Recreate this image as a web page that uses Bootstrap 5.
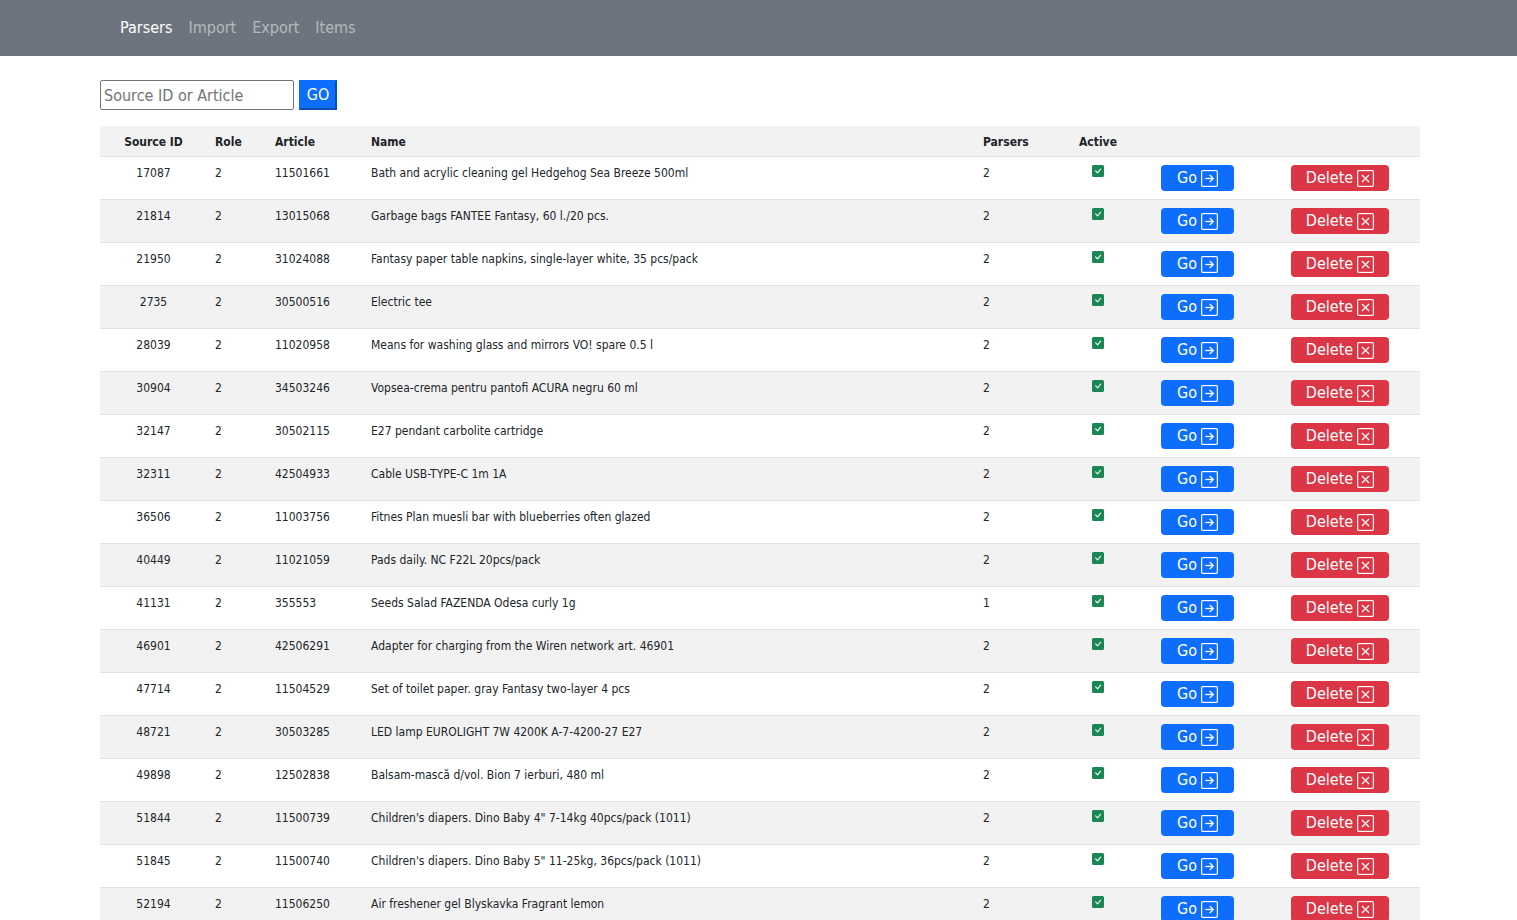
<!DOCTYPE html>
<html lang="en">
<head>
<meta charset="utf-8">
<meta name="viewport" content="width=device-width, initial-scale=1">
<title>Parsers</title>
<link href="https://cdn.jsdelivr.net/npm/bootstrap@5.3.0/dist/css/bootstrap.min.css" rel="stylesheet">
<style>
  body { font-family: Tahoma, "DejaVu Sans Condensed", "DejaVu Sans", sans-serif; }
  .page-wrap { padding-left: 100px; padding-right: 97px; }
  .top-bar { background: #6c757d; }
  .top-bar .nav-link { --bs-nav-link-color: rgba(255, 255, 255, .5); }
  .top-bar .nav-link.active { color: #fff; }
  .search-form { gap: 5px; }
  .search-box { width: 194px; height: 30px; padding: 1px 3px; border: 1px solid #767676; border-radius: 2px; }
  .search-box::placeholder { color: #757575; opacity: 1; }
  .search-go { width: 38px; height: 30px; padding: 0; color: #fff; background: #0d6efd; border: 2px solid; border-color: #0d6efd #0a4fb5 #0a4fb5 #0d6efd; line-height: 26px; }
  .items-table { table-layout: fixed; min-width: 960px; font-size: 12px; line-height: 16px; }
  .items-table > tbody { border-top: 0; }
  .items-table > thead > tr > * { padding-bottom: 6px; background: #f2f2f2; border-color: #dee2e6; box-shadow: none; }
  .items-table > tbody > tr:nth-child(even) > * { background: #f2f2f2; }
  .items-table svg { display: block; }
  .col-source { width: 107px; } .col-role { width: 60px; } .col-article { width: 96px; }
  .col-parsers { width: 96px; } .col-active { width: 54px; } .col-go { width: 145px; } .col-delete { width: 150px; }
  .cell-delete { padding-right: 18px !important; }
  .row-btn { display: inline-flex; align-items: center; justify-content: center; gap: 4px; height: 26px; padding: 0; border: 0; border-radius: 4px; color: #fff; font-size: 16px; line-height: 24px; vertical-align: top; }
  .row-btn svg { width: 17px; height: 17px; stroke: currentColor; stroke-width: .3; overflow: visible; }
  .btn-go { width: 73px; }
  .btn-delete { width: 98px; }
</style>
</head>
<body>
<svg class="d-none" aria-hidden="true">
  <symbol id="i-check" viewBox="0 0 16 16"><path fill="currentColor" d="M2 0a2 2 0 0 0-2 2v12a2 2 0 0 0 2 2h12a2 2 0 0 0 2-2V2a2 2 0 0 0-2-2H2zm10.03 4.97a.75.75 0 0 1 .011 1.05l-3.992 4.99a.75.75 0 0 1-1.08.02L4.324 8.384a.75.75 0 1 1 1.06-1.06l2.094 2.093 3.473-4.425a.75.75 0 0 1 1.08-.022z"/></symbol>
  <symbol id="i-go" viewBox="0 0 16 16"><path fill="currentColor" fill-rule="evenodd" d="M15 2a1 1 0 0 0-1-1H2a1 1 0 0 0-1 1v12a1 1 0 0 0 1 1h12a1 1 0 0 0 1-1V2zM0 2a2 2 0 0 1 2-2h12a2 2 0 0 1 2 2v12a2 2 0 0 1-2 2H2a2 2 0 0 1-2-2V2zm4.5 5.5a.5.5 0 0 0 0 1h5.793l-2.147 2.146a.5.5 0 0 0 .708.708l3-3a.5.5 0 0 0 0-.708l-3-3a.5.5 0 1 0-.708.708L10.293 7.5H4.5z"/></symbol>
  <symbol id="i-x" viewBox="0 0 16 16"><path fill="currentColor" d="M14 1a1 1 0 0 1 1 1v12a1 1 0 0 1-1 1H2a1 1 0 0 1-1-1V2a1 1 0 0 1 1-1h12zM2 0a2 2 0 0 0-2 2v12a2 2 0 0 0 2 2h12a2 2 0 0 0 2-2V2a2 2 0 0 0-2-2H2z"/><path fill="currentColor" d="M4.646 4.646a.5.5 0 0 1 .708 0L8 7.293l2.646-2.647a.5.5 0 0 1 .708.708L8.707 8l2.647 2.646a.5.5 0 0 1-.708.708L8 8.707l-2.646 2.647a.5.5 0 0 1-.708-.708L7.293 8 4.646 5.354a.5.5 0 0 1 0-.708z"/></symbol>
</svg>

<nav class="navbar navbar-expand top-bar">
  <div class="page-wrap w-100">
    <ul class="navbar-nav ps-2 ms-1">
      <li class="nav-item"><a class="nav-link active" aria-current="page" href="#">Parsers</a></li>
      <li class="nav-item"><a class="nav-link" href="#">Import</a></li>
      <li class="nav-item"><a class="nav-link" href="#">Export</a></li>
      <li class="nav-item"><a class="nav-link" href="#">Items</a></li>
    </ul>
  </div>
</nav>

<main class="page-wrap pt-4">
  <form class="search-form d-flex mb-3" onsubmit="return false">
    <input class="search-box" type="text" placeholder="Source ID or Article" aria-label="Source ID or Article">
    <button class="search-go" type="submit">GO</button>
  </form>

  <table class="table items-table">
    <colgroup><col class="col-source"><col class="col-role"><col class="col-article"><col><col class="col-parsers"><col class="col-active"><col class="col-go"><col class="col-delete"></colgroup>
    <thead>
      <tr><th class="text-center">Source ID</th><th>Role</th><th>Article</th><th>Name</th><th>Parsers</th><th>Active</th><th></th><th></th></tr>
    </thead>
    <tbody id="items"></tbody>
  </table>
</main>

<template id="item-row">
  <tr>
    <td class="text-center"></td><td></td><td></td><td></td><td></td>
    <td><svg class="mx-auto text-success" width="12" height="12" role="img" aria-label="Active"><use href="#i-check"/></svg></td>
    <td class="text-center"><button type="button" class="row-btn btn-go bg-primary">Go <svg aria-hidden="true"><use href="#i-go"/></svg></button></td>
    <td class="text-center cell-delete"><button type="button" class="row-btn btn-delete bg-danger">Delete <svg aria-hidden="true"><use href="#i-x"/></svg></button></td>
  </tr>
</template>

<script src="https://cdn.jsdelivr.net/npm/bootstrap@5.3.0/dist/js/bootstrap.bundle.min.js"></script>
<script>
  // source id, role, article, name, parsers
  const items = [
    [17087, 2, '11501661', 'Bath and acrylic cleaning gel Hedgehog Sea Breeze 500ml', 2],
    [21814, 2, '13015068', 'Garbage bags FANTEE Fantasy, 60 l./20 pcs.', 2],
    [21950, 2, '31024088', 'Fantasy paper table napkins, single-layer white, 35 pcs/pack', 2],
    [2735, 2, '30500516', 'Electric tee', 2],
    [28039, 2, '11020958', 'Means for washing glass and mirrors VO! spare 0.5 l', 2],
    [30904, 2, '34503246', 'Vopsea-crema pentru pantofi ACURA negru 60 ml', 2],
    [32147, 2, '30502115', 'E27 pendant carbolite cartridge', 2],
    [32311, 2, '42504933', 'Cable USB-TYPE-C 1m 1A', 2],
    [36506, 2, '11003756', 'Fitnes Plan muesli bar with blueberries often glazed', 2],
    [40449, 2, '11021059', 'Pads daily. NC F22L 20pcs/pack', 2],
    [41131, 2, '355553', 'Seeds Salad FAZENDA Odesa curly 1g', 1],
    [46901, 2, '42506291', 'Adapter for charging from the Wiren network art. 46901', 2],
    [47714, 2, '11504529', 'Set of toilet paper. gray Fantasy two-layer 4 pcs', 2],
    [48721, 2, '30503285', 'LED lamp EUROLIGHT 7W 4200K A-7-4200-27 E27', 2],
    [49898, 2, '12502838', 'Balsam-mască d/vol. Bion 7 ierburi, 480 ml', 2],
    [51844, 2, '11500739', 'Children\'s diapers. Dino Baby 4" 7-14kg 40pcs/pack (1011)', 2],
    [51845, 2, '11500740', 'Children\'s diapers. Dino Baby 5" 11-25kg, 36pcs/pack (1011)', 2],
    [52194, 2, '11506250', 'Air freshener gel Blyskavka Fragrant lemon', 2]
  ];
  const body = document.getElementById('items');
  const template = document.getElementById('item-row');
  for (const item of items) {
    const row = template.content.cloneNode(true);
    const cells = row.querySelectorAll('td');
    item.forEach((value, i) => { cells[i].textContent = value; });
    body.appendChild(row);
  }
</script>
</body>
</html>
